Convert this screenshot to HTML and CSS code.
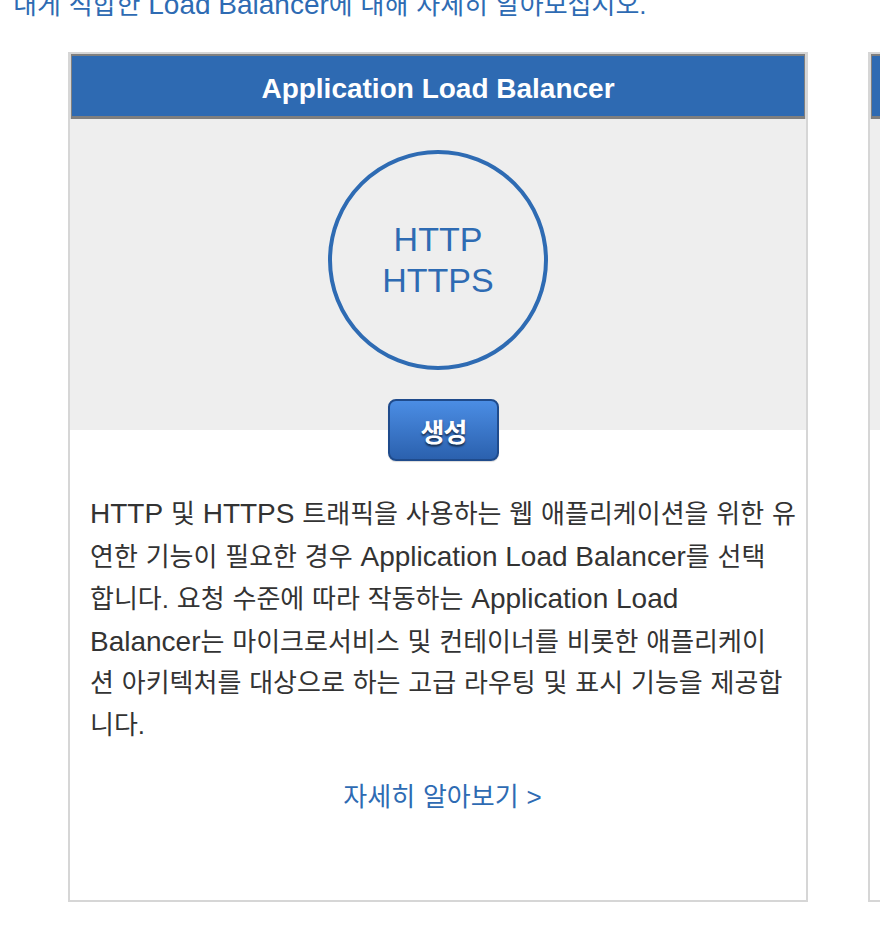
FILE: index.html
```html
<!DOCTYPE html>
<html lang="ko">
<head>
<meta charset="utf-8">
<title>Load Balancer 유형 선택</title>
<link rel="stylesheet" href="styles.css">
</head>
<body>
<p class="intro">내게 적합한 <span class="en">Load Balancer</span>에 대해 자세히 알아보십시오.</p>
<div class="cards">
  <section class="card">
    <h2 class="card-head">Application Load Balancer</h2>
    <div class="hero">
      <div class="ring"><span>HTTP</span><span>HTTPS</span></div>
      <div class="actions"><button class="btn" type="button">생성</button></div>
    </div>
    <p class="desc"><span class="en">HTTP</span> 및 <span class="en">HTTPS</span> 트래픽을 사용하는 웹 애플리케이션을 위한 유<br>연한 기능이 필요한 경우 <span class="en">Application Load Balancer</span>를 선택<br>합니다. 요청 수준에 따라 작동하는 <span class="en">Application Load</span><br><span class="en">Balancer</span>는 마이크로서비스 및 컨테이너를 비롯한 애플리케이<br>션 아키텍처를 대상으로 하는 고급 라우팅 및 표시 기능을 제공합<br>니다.</p>
    <div class="more"><a class="more-link" href="#">자세히 알아보기 &gt;</a></div>
  </section>
  <section class="card">
    <h2 class="card-head">Network Load Balancer</h2>
    <div class="hero">
      <div class="ring"><span>TCP</span><span>TLS</span></div>
      <div class="actions"><button class="btn" type="button">생성</button></div>
    </div>
    <p class="desc">네트워크 로드 밸런서</p>
    <div class="more"><a class="more-link" href="#">자세히 알아보기 &gt;</a></div>
  </section>
</div>
</body>
</html>
```
FILE: styles.css
```css
html, body {
  margin: 0;
  padding: 0;
  background: #ffffff;
  overflow: hidden;
}

body {
  font-family: "Liberation Sans", "Noto Sans CJK KR", sans-serif;
  color: #333333;
}

.en {
  font-size: 28px;
  letter-spacing: 0;
  word-spacing: 0;
}

.intro {
  margin: -15px 0 0 13px;
  font-size: 26px;
  line-height: 40px;
  word-spacing: 0.6px;
  color: #2e6bb3;
  white-space: nowrap;
}

.cards {
  display: flex;
  gap: 60px;
  margin: 27px 0 0 68px;
  width: 1600px;
}

.card {
  flex: 0 0 740px;
  box-sizing: border-box;
  height: 850px;
  border: 2px solid #d6d6d6;
  background: #ffffff;
  display: flex;
  flex-direction: column;
}

.card-head {
  margin: 0;
  height: 65px;
  box-sizing: border-box;
  background: #2e6ab2;
  border: solid #d6d6d6;
  border-width: 0 1px;
  box-shadow: inset 0 2px #7f7f7f, inset 0 -3px #7f7f7f, inset 1px 0 #7f7f7f, inset -1px 0 #7f7f7f;
  display: flex;
  align-items: center;
  justify-content: center;
  color: #ffffff;
  font-size: 28px;
  font-weight: bold;
  padding-top: 5px;
}

.hero {
  display: flex;
  flex-direction: column;
  align-items: center;
  padding-top: 31px;
  background: linear-gradient(#eeeeee calc(100% - 31px), #ffffff calc(100% - 31px));
}

.ring {
  width: 220px;
  height: 220px;
  box-sizing: border-box;
  border: 4px solid #2e6bb3;
  border-radius: 50%;
  display: flex;
  flex-direction: column;
  align-items: center;
  justify-content: center;
  color: #2e6bb3;
  font-size: 34px;
  line-height: 41px;
}

.actions {
  align-self: stretch;
  display: flex;
  justify-content: center;
  margin-top: 29px;
  padding: 0 9px 0 20px;
}

.btn {
  width: 111px;
  height: 62px;
  box-sizing: border-box;
  border: 2px solid #1f4b8c;
  border-radius: 8px;
  background: linear-gradient(#4b8de4, #2b61ae);
  color: #ffffff;
  font-family: "Noto Sans CJK KR", sans-serif;
  font-size: 26px;
  font-weight: bold;
  letter-spacing: -1px;
  text-shadow: 0 2px 2px rgba(0, 0, 0, 0.6);
  padding: 0;
  box-shadow: 0 1px 1px rgba(0, 0, 0, 0.15);
}

.desc {
  margin: 32px 0 0;
  padding: 0 10px 0 20px;
  font-size: 26px;
  line-height: 41.5px;
  word-spacing: 0.6px;
  white-space: nowrap;
  color: #333333;
}

.more {
  display: flex;
  justify-content: center;
  margin-top: 31px;
  padding: 0 10px 0 19px;
  font-size: 26px;
  line-height: 41.5px;
  word-spacing: 0.6px;
}

.more-link {
  color: #2e6bb3;
  text-decoration: none;
}
```
